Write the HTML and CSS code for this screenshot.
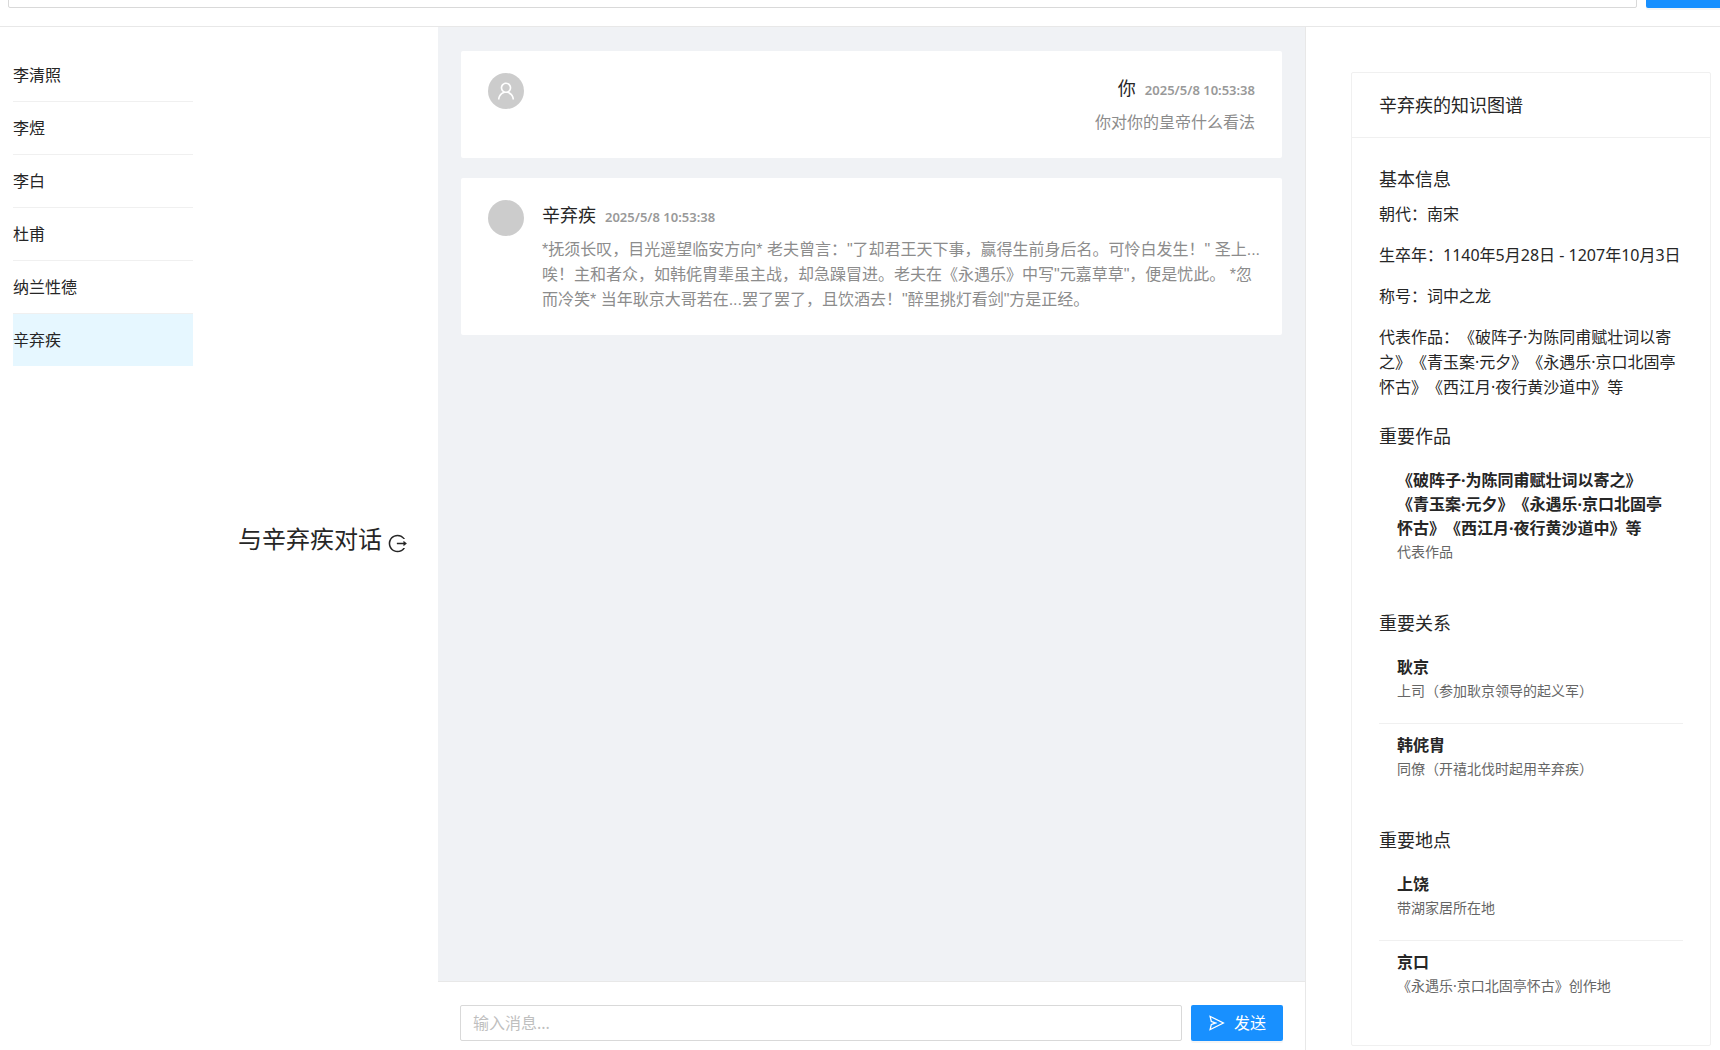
FILE: index.html
```html
<!DOCTYPE html>
<html lang="zh-CN">
<head>
<meta charset="utf-8">
<title>与辛弃疾对话</title>
<link rel="stylesheet" href="styles.css">
</head>
<body>
<div class="page">
  <header class="topbar">
    <input class="field" type="text" aria-label="搜索">
    <button class="btn topbar-btn" type="button" aria-label="搜索"></button>
  </header>
  <div class="columns">
    <aside class="side">
      <ul class="poets">
        <li>李清照</li>
        <li>李煜</li>
        <li>李白</li>
        <li>杜甫</li>
        <li>纳兰性德</li>
        <li class="active">辛弃疾</li>
      </ul>
      <h1 class="talk">与辛弃疾对话
        <svg viewBox="0 0 1024 1024" width="21" height="21" fill="currentColor"><path d="M868 732h-70.3c-4.8 0-9.3 2.1-12.3 5.8-7 8.5-14.5 16.7-22.4 24.5a353.84 353.84 0 01-112.7 75.9A352.8 352.8 0 01512.4 866c-47.9 0-94.3-9.4-137.9-27.8a353.84 353.84 0 01-112.7-75.9 353.28 353.28 0 01-76-112.5C167.3 606.2 158 559.9 158 512s9.4-94.2 27.8-137.8c17.8-42.1 43.4-80 76-112.5s70.5-58.1 112.7-75.9c43.6-18.4 90-27.8 137.9-27.8 47.9 0 94.3 9.3 137.9 27.8 42.2 17.8 80.1 43.4 112.7 75.9 7.9 7.9 15.3 16.1 22.4 24.5 3 3.7 7.6 5.8 12.3 5.8H868c6.3 0 10.2-7 6.7-12.3C798 160.5 663.8 81.6 511.3 82 271.7 82.6 79.6 277.1 82 516.4 84.4 751.9 276.2 942 512.4 942c152.1 0 285.7-78.8 362.3-197.7 3.4-5.3-.4-12.3-6.7-12.3zm88.9-226.3L815 393.7c-5.3-4.2-13-.4-13 6.3v76H488c-4.4 0-8 3.6-8 8v56c0 4.4 3.6 8 8 8h314v76c0 6.7 7.8 10.5 13 6.3l141.9-112a8 8 0 000-12.6z"/></svg>
      </h1>
    </aside>
    <main class="chat">
      <div class="messages">
        <article class="message mine">
          <span class="avatar"><svg viewBox="0 0 1024 1024" width="22" height="22" fill="currentColor"><path d="M858.5 763.6a374 374 0 00-80.6-119.5 375.63 375.63 0 00-119.5-80.6c-.4-.2-.8-.3-1.2-.5C719.5 518 760 444.7 760 362c0-137-111-248-248-248S264 225 264 362c0 82.7 40.5 156 102.8 201.1-.4.2-.8.3-1.2.5-44.8 18.9-85 46-119.5 80.6a375.63 375.63 0 00-80.6 119.5A371.7 371.7 0 00136 901.8a8 8 0 008 8.2h60c4.4 0 7.9-3.5 8-7.8 2-77.2 33-149.5 87.8-204.3 56.7-56.7 132-87.9 212.2-87.9s155.5 31.2 212.2 87.9C779 752.7 810 825 812 902.2c.1 4.4 3.6 7.8 8 7.8h60a8 8 0 008-8.2c-1-47.8-10.9-94.3-29.5-138.2zM512 534c-45.9 0-89.1-17.9-121.6-50.4S340 407.9 340 362c0-45.9 17.9-89.1 50.4-121.6S466.1 190 512 190s89.1 17.9 121.6 50.4S684 316.1 684 362c0 45.9-17.9 89.1-50.4 121.6S557.9 534 512 534z"/></svg></span>
          <div class="message-body">
            <h2 class="author">你<time>2025/5/8 10:53:38</time></h2>
            <p>你对你的皇帝什么看法</p>
          </div>
        </article>
        <article class="message">
          <span class="avatar"></span>
          <div class="message-body">
            <h2 class="author">辛弃疾<time>2025/5/8 10:53:38</time></h2>
            <p>*抚须长叹，目光遥望临安方向* 老夫曾言："了却君王天下事，赢得生前身后名。可怜白发生！" 圣上...唉！主和者众，如韩侂胄辈虽主战，却急躁冒进。老夫在《永遇乐》中写"元嘉草草"，便是忧此。 *忽而冷笑* 当年耿京大哥若在...罢了罢了，且饮酒去！"醉里挑灯看剑"方是正经。</p>
          </div>
        </article>
      </div>
      <form class="composer">
        <input class="field" type="text" placeholder="输入消息..." aria-label="输入消息">
        <button class="btn" type="button">
          <svg viewBox="0 0 1024 1024" width="18" height="18" fill="currentColor"><path d="M931.4 498.9L94.9 79.5c-3.4-1.7-7.3-2.1-11-1.2a15.99 15.99 0 00-11.7 19.3l86.2 352.2c1.3 5.3 5.2 9.6 10.4 11.3l147.7 50.7-147.6 50.7c-5.2 1.8-9.1 6-10.3 11.3L72.2 926.5c-.9 3.7-.5 7.6 1.2 10.9 3.9 7.9 13.5 11.1 21.5 7.2l836.5-417c3.1-1.5 5.6-4.1 7.2-7.1 3.9-8 .7-17.6-7.2-21.6zM170.8 826.3l50.3-205.6 295.2-101.3c2.3-.8 4.2-2.6 5-5 1.4-4.2-.8-8.7-5-10.2L221.1 403 171 198.2l628 314.9-628.2 313.2z"/></svg>
          发送
        </button>
      </form>
    </main>
    <aside class="graph">
      <section class="card">
        <h2 class="card-title">辛弃疾的知识图谱</h2>
        <div class="card-body">
          <section class="basics">
            <h3>基本信息</h3>
            <p>朝代：南宋</p>
            <p>生卒年：1140年5月28日 - 1207年10月3日</p>
            <p>称号：词中之龙</p>
            <p>代表作品：《破阵子·为陈同甫赋壮词以寄之》《青玉案·元夕》《永遇乐·京口北固亭怀古》《西江月·夜行黄沙道中》等</p>
          </section>
          <section>
            <h3>重要作品</h3>
            <ul class="facts">
              <li><strong>《破阵子·为陈同甫赋壮词以寄之》《青玉案·元夕》《永遇乐·京口北固亭怀古》《西江月·夜行黄沙道中》等</strong><span>代表作品</span></li>
            </ul>
          </section>
          <section>
            <h3>重要关系</h3>
            <ul class="facts">
              <li><strong>耿京</strong><span>上司（参加耿京领导的起义军）</span></li>
              <li><strong>韩侂胄</strong><span>同僚（开禧北伐时起用辛弃疾）</span></li>
            </ul>
          </section>
          <section>
            <h3>重要地点</h3>
            <ul class="facts">
              <li><strong>上饶</strong><span>带湖家居所在地</span></li>
              <li><strong>京口</strong><span>《永遇乐·京口北固亭怀古》创作地</span></li>
            </ul>
          </section>
        </div>
      </section>
    </aside>
  </div>
</div>
</body>
</html>
```
FILE: styles.css
```css
* {
  box-sizing: border-box;
}

body {
  margin: 0;
  background: #fff;
  color: #262626;
  font-family: "Noto Sans", "Noto Sans CJK SC", sans-serif;
  font-size: 16px;
  line-height: 25px;
  text-spacing-trim: space-all;
}

h1, h2, h3, p, ul {
  margin: 0;
  padding: 0;
  font-weight: 400;
}

ul {
  list-style: none;
}

svg {
  display: block;
  flex: none;
}

.page {
  display: flex;
  flex-direction: column;
  min-height: 100vh;
}

/* Controls */
.field {
  flex: 1;
  min-width: 0;
  height: 36px;
  padding: 0 12px;
  border: 1px solid #d9d9d9;
  border-radius: 2px;
  background: #fff;
  color: inherit;
  font: inherit;
}

.field::placeholder {
  color: #bfbfbf;
}

.btn {
  display: flex;
  align-items: center;
  justify-content: center;
  gap: 8px;
  width: 92px;
  height: 36px;
  padding: 0;
  border: 0;
  border-radius: 2px;
  background: #1890ff;
  box-shadow: 0 2px 0 rgba(0, 0, 0, 0.04);
  color: #fff;
  font: inherit;
}

/* Search bar, scrolled partly out of view */
.topbar {
  display: flex;
  align-items: flex-end;
  gap: 9px;
  height: 27px;
  padding: 0 0 18px 8px;
  overflow: hidden;
  border-bottom: 1px solid #e8e8e8;
}

.topbar-btn {
  width: 74px;
  border-radius: 2px 0 0 2px;
}

.columns {
  display: grid;
  flex: 1;
  grid-template-columns: 438px minmax(0, 1fr) 414px;
}

/* Poet list */
.side {
  display: grid;
  grid-template-columns: 180px 1fr;
  padding: 0 30px 0 13px;
}

.poets {
  padding-top: 22px;
}

.poets li {
  padding: 14px 0 13px;
  border-bottom: 1px solid #f0f0f0;
}

.poets .active {
  border-bottom: 0;
  background: #e6f7ff;
}

.talk {
  display: flex;
  align-items: center;
  align-self: center;
  justify-content: flex-end;
  gap: 5px;
  font-size: 24px;
  line-height: 32px;
}

.talk svg {
  margin-top: 10px;
}

/* Conversation */
.chat {
  display: flex;
  flex-direction: column;
  border-right: 1px solid #e8e8e8;
  background: #f0f2f5;
}

.messages {
  display: flex;
  flex: 1;
  flex-direction: column;
  gap: 20px;
  padding: 24px 23px;
}

.message {
  display: flex;
  gap: 18px;
  padding: 22px 20px 23px 27px;
  border-radius: 2px;
  background: #fff;
}

.message.mine {
  padding-right: 27px;
}

.avatar {
  display: flex;
  flex: none;
  align-items: center;
  justify-content: center;
  width: 36px;
  height: 36px;
  border-radius: 50%;
  background: #ccc;
  color: #fff;
}

.message-body {
  flex: 1;
  color: #8c8c8c;
}

.message-body p {
  font-family: "Liberation Sans", "Noto Sans CJK SC", sans-serif;
}

.mine .message-body {
  text-align: right;
}

.author {
  margin-bottom: 7px;
  color: #262626;
  font-size: 18px;
  line-height: 30px;
}

.author time {
  margin-left: 9px;
  color: #999;
  font-size: 13px;
  font-weight: 600;
  line-height: 16px;
}

.composer {
  display: flex;
  gap: 9px;
  padding: 23px 22px 9px;
  border-top: 1px solid #e8e8e8;
  background: #fff;
}

/* Knowledge graph */
.graph {
  padding: 45px 9px 4px 45px;
}

.card {
  border: 1px solid #f0f0f0;
  border-radius: 2px;
}

.card-title {
  padding: 18px 27px;
  border-bottom: 1px solid #f0f0f0;
  font-size: 18px;
  line-height: 28px;
}

.card-body {
  padding: 27px;
}

.card h3 {
  margin-bottom: 9px;
  font-size: 18px;
  line-height: 28px;
}

.basics p {
  margin-bottom: 16px;
}

.basics {
  margin-bottom: 22px;
}

.facts {
  margin-bottom: 25px;
}

section:last-child > .facts {
  margin-bottom: 0;
}

.facts li {
  display: flex;
  flex-direction: column;
  padding: 9px 18px 20px;
  line-height: 24px;
}

.facts li + li {
  border-top: 1px solid #f0f0f0;
}

.facts strong {
  font-weight: 700;
}

.facts span {
  color: #666;
  font-size: 14px;
}
```
